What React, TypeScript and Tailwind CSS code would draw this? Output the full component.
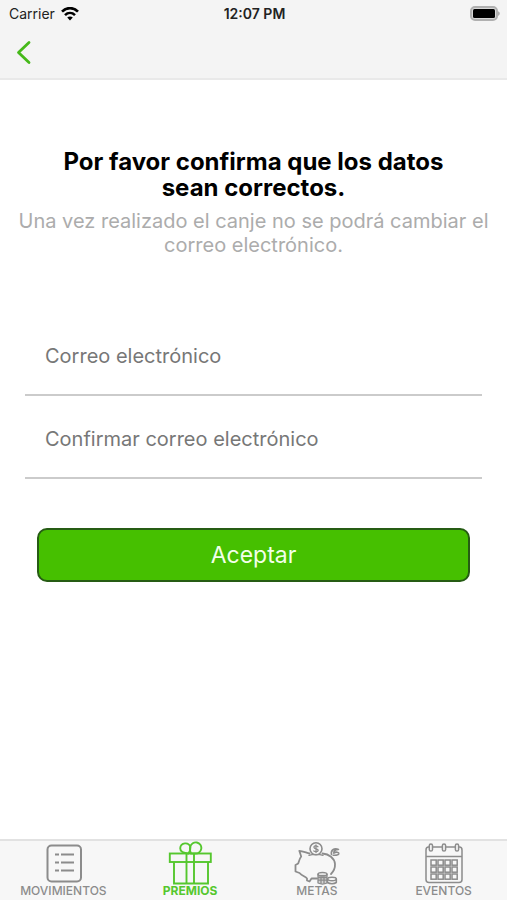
import type { ReactNode } from "react";

function WifiIcon() {
  return (
    <svg width="18" height="14" viewBox="0 0 18 14" fill="none" stroke="#000" strokeWidth="2.6" aria-hidden="true">
      <path d="M1 4.7C5.6 -0.1 12.4 -0.1 17 4.7" />
      <path d="M4 8.1C6.9 5.3 11.1 5.3 14 8.1" />
      <path d="M6.2 10.6C7.8 9.2 10.2 9.2 11.8 10.6L9 13.6Z" fill="#000" stroke="none" />
    </svg>
  );
}

function BatteryIcon() {
  return (
    <svg width="30" height="15" viewBox="0 0 30 15" aria-hidden="true">
      <rect x="1" y="1" width="26" height="13" rx="4" fill="#d8d8d8" stroke="#b0b0b0" strokeWidth="2" />
      <rect x="3" y="3" width="22" height="9" rx="1.5" fill="#000" />
      <path d="M28 5.2C30.4 6 30.4 9 28 9.8Z" fill="#adadad" />
    </svg>
  );
}

function ListIcon() {
  return (
    <svg width="44" height="44" viewBox="0 0 44 44" fill="none" stroke="currentColor" strokeWidth="2" aria-hidden="true">
      <rect x="6.5" y="4.5" width="33.5" height="36" rx="4" />
      <path d="M14 13.5h4M20 13.5h13M14 21.5h4M20 21.5h13M14 29.5h4M20 29.5h13" />
    </svg>
  );
}

function GiftIcon() {
  return (
    <svg width="44" height="44" viewBox="0 0 44 44" fill="none" stroke="currentColor" strokeWidth="1.9" aria-hidden="true">
      <rect x="1.8" y="12.5" width="41" height="8.5" />
      <path d="M6 21V42.5H40V21M18.5 12.5v30M26 12.5v30" />
      <path d="M20.5 12.5C14.5 12 12.2 10 12.2 7.2A5.2 5.2 0 0 1 22.4 6.2C22.7 8.5 21.9 10.5 20.5 12.5Z" />
      <path d="M23 12.5C21.9 10 21.5 8 22.3 5.6A5.6 5.6 0 1 1 27 12.5Z" />
    </svg>
  );
}

function PiggyIcon() {
  return (
    <svg width="46" height="44" viewBox="0 0 46 44" fill="none" stroke="currentColor" strokeWidth="1.8" strokeLinejoin="round" strokeLinecap="round" aria-hidden="true">
      <path d="M15.5 12.5C12.5 11.8 8.5 10 5.3 9.8L7.2 15.5C5.5 17.5 5 20 4.2 22.5L1.5 24V30.5L5.5 32C8 35 11.5 35.5 13 37.5V39.5L15.5 40.5L17.5 37.5H23" />
      <path d="M28.5 12.5C35 13 40.5 17 41 23C41.2 27 39.5 30.5 37 33" />
      <circle cx="22" cy="7.7" r="6" strokeWidth="1.6" />
      <path d="M24 5.7C22 4.2 19.6 5 20 6.6C20.5 8 24 7.6 24.2 9.2C24 11 21 10.8 19.8 9.9M22 4V11.5M15 14.3L18 13.6H26L29 14.3" strokeWidth="1.3" />
      <path d="M37.5 13.5C36.5 9.5 40 6.5 44.5 8.5C41 8.5 39.5 10 39.8 12.2C42 10.5 45 11 44.8 12.7C44.2 14.5 41 14.3 39.2 14.2" strokeWidth="1.6" />
      <path d="M24 33.4V42C26.5 43.2 30.5 43.2 33 42V33.4Z" fill="currentColor" fillOpacity="0.35" stroke="none" />
      <path d="M24 33.4V42C26.5 43.2 30.5 43.2 33 42V33.4M24 36.5H33M24 39.2H33M27 36V42.5M30 36V42.5" strokeWidth="1.3" />
      <ellipse cx="28.5" cy="33.2" rx="4.5" ry="1.7" strokeWidth="1.6" />
      <path d="M33.5 38V41.5C36 43.2 40 43.2 42.3 41.5V38" strokeWidth="1.6" />
      <ellipse cx="38" cy="38" rx="4.3" ry="1.7" strokeWidth="1.5" />
    </svg>
  );
}

function CalendarIcon() {
  const columns = [7, 14, 21, 28];
  const rows = [19.5, 26.5, 33.5];
  return (
    <svg width="40" height="44" viewBox="0 0 40 44" fill="none" stroke="currentColor" strokeWidth="1.5" aria-hidden="true">
      <path d="M5 6H4.5Q2 6 2 9V38.5Q2 41.5 5 41.5H35Q38 41.5 38 38.5V9Q38 6 35.5 6H35M9 6H18M22 6H31M2 15.5H38" />
      <rect x="5.3" y="3" width="3.2" height="7" rx="1.6" />
      <rect x="18.4" y="3" width="3.2" height="7" rx="1.6" />
      <rect x="31.4" y="3" width="3.2" height="7" rx="1.6" />
      {rows.map((y) => columns.map((x) => <rect key={`${x}-${y}`} x={x} y={y - 0.5} width="5.2" height="5.2" />))}
    </svg>
  );
}

function Tab({ label, icon, active = false }: { label: string; icon: ReactNode; active?: boolean }) {
  return (
    <a
      href="#"
      aria-current={active ? "page" : undefined}
      className={`flex flex-1 flex-col items-center text-[12px] leading-3 ${active ? "font-bold text-[#55c72e]" : "font-medium text-[#8c8c8c]"}`}
    >
      {icon}
      <span>{label}</span>
    </a>
  );
}

function Field({ name, label }: { name: string; label: string }) {
  return (
    <div className="border-b-2 border-[#cbcbcb]">
      <input
        name={name}
        type="email"
        aria-label={label}
        placeholder={label}
        className="block h-[81px] w-full bg-transparent px-5 pt-1 text-[20px] text-[#555] outline-none placeholder:text-[#777]"
      />
    </div>
  );
}

export default function App() {
  return (
    <div className="flex min-h-screen flex-col bg-white font-['Inter','Liberation_Sans',sans-serif]">
      <header className="border-b-2 border-[#e9e9e9] bg-[#f4f4f4]">
        <div className="grid h-[27px] grid-cols-3 items-center pr-[7px] pl-[9px] text-[14px] text-[#222]">
          <div className="flex items-center gap-[6px]">
            <span>Carrier</span>
            <WifiIcon />
          </div>
          <span className="text-center font-semibold">12:07 PM</span>
          <span className="flex justify-end">
            <BatteryIcon />
          </span>
        </div>
        <div className="flex h-[51px] items-center px-3">
          <button type="button" aria-label="Volver" className="flex h-9 w-6 items-center justify-center">
            <svg width="16" height="26" viewBox="0 0 16 26" fill="none" stroke="#46b91a" strokeWidth="2.8" strokeLinecap="round" strokeLinejoin="round" aria-hidden="true">
              <path d="M13 2.5L2.5 12.5L13 22.5" />
            </svg>
          </button>
        </div>
      </header>

      <main className="flex-1 pt-[69px]">
        <div className="px-3 text-center">
          <h1 className="mx-auto max-w-[400px] text-[24px] leading-[26px] font-bold text-black">
            Por favor confirma que los datos sean correctos.
          </h1>
          <p className="mt-2 text-[20px] leading-6 text-[#acacac]">
            Una vez realizado el canje no se podrá cambiar el correo electrónico.
          </p>
        </div>
        <form className="mt-14 px-[25px]" onSubmit={(event) => event.preventDefault()}>
          <Field name="email" label="Correo electrónico" />
          <Field name="email-confirm" label="Confirmar correo electrónico" />
          <div className="px-3 pt-[49px]">
            <button type="submit" className="h-[54px] w-full rounded-[10px] border-2 border-[#265c14] bg-[#46c000] text-[23px] text-[#f2ffe9]">
              Aceptar
            </button>
          </div>
        </form>
      </main>

      <nav aria-label="Principal" className="flex border-t-2 border-[#e2e2e2] bg-[#f7f7f7] pb-[3px]">
        <Tab label="MOVIMIENTOS" icon={<ListIcon />} />
        <Tab label="PREMIOS" icon={<GiftIcon />} active />
        <Tab label="METAS" icon={<PiggyIcon />} />
        <Tab label="EVENTOS" icon={<CalendarIcon />} />
      </nav>
    </div>
  );
}
